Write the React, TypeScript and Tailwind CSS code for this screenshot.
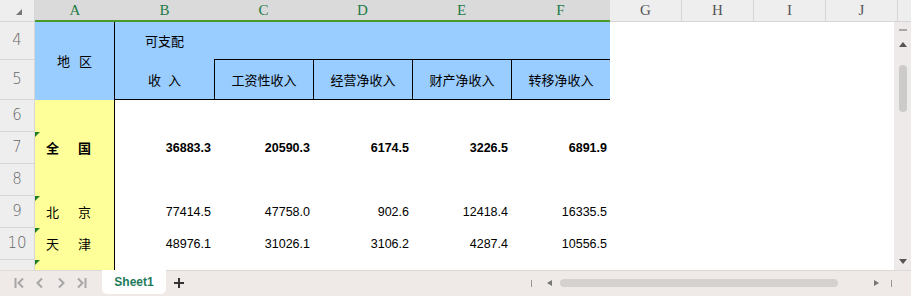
import React from "react";

const cjk = { fontFamily: '"Noto Sans CJK SC", sans-serif' };
const num = { fontFamily: '"Liberation Sans", Arial, sans-serif' };
const hdr = { fontFamily: '"Liberation Serif", "DejaVu Serif", serif' };

function Tri() {
  return (
    <div className="absolute left-0 top-0 w-0 h-0 border-t-[5px] border-t-[#1f7a2a] border-r-[5px] border-r-transparent" />
  );
}

function RowNum({ n, h }: { n: string; h: string }) {
  return (
    <div
      className={`${h} flex items-center justify-center bg-[#eeeeee] border-b border-r border-[#d6d6d6] text-[15px] font-light text-[#666]`}
      style={{ fontFamily: '"DejaVu Sans", sans-serif', fontWeight: 200 }}
    >
      {n}
    </div>
  );
}

const rows = [
  { n: "6", name: null, vals: null, bold: false, tri: false },
  { n: "7", name: ["全", "国"], vals: ["36883.3", "20590.3", "6174.5", "3226.5", "6891.9"], bold: true, tri: true },
  { n: "8", name: null, vals: null, bold: false, tri: false },
  { n: "9", name: ["北", "京"], vals: ["77414.5", "47758.0", "902.6", "12418.4", "16335.5"], bold: false, tri: true },
  { n: "10", name: ["天", "津"], vals: ["48976.1", "31026.1", "3106.2", "4287.4", "10556.5"], bold: false, tri: true },
];

export default function App() {
  const sel = ["A", "B", "C", "D", "E", "F"];
  const selW = ["w-[80px]", "w-[99px]", "w-[99px]", "w-[99px]", "w-[99px]", "w-[99px]"];
  return (
    <div className="w-[911px] h-[296px] overflow-hidden bg-white flex flex-col">
      {/* column header */}
      <div className="flex h-[22px] shrink-0 bg-[#eeeeee]">
        <div className="w-[35px] h-[22px] border-r border-b border-[#d6d6d6] relative flex items-start justify-center">
          <div className="mt-[9px] ml-[4px] w-0 h-0 border-b-[6px] border-b-[#777] border-l-[6px] border-l-transparent" />
        </div>
        {sel.map((c, i) => (
          <div
            key={c}
            className={`${selW[i]} h-[22px] bg-[#dadada] border-b-2 border-[#4a9a2a] flex items-center justify-center text-[15px] text-[#1e7a46]`}
            style={hdr}
          >
            {c}
          </div>
        ))}
        {["G", "H", "I", "J"].map((c) => (
          <div
            key={c}
            className="w-[72px] h-[22px] border-b border-r border-[#d6d6d6] flex items-center justify-center text-[15px] text-[#555]"
            style={hdr}
          >
            {c}
          </div>
        ))}
        <div className="flex-1 h-[22px] border-b border-[#d6d6d6]" />
      </div>

      {/* body */}
      <div className="flex h-[248px] shrink-0">
        <div className="w-[894px] grid grid-cols-[35px_80px_99px_99px_99px_99px_99px_1fr] grid-rows-[38px_40px_32px_32px_32px_32px_32px_10px] overflow-hidden">
          {/* row 4 & 5 */}
          <div className="col-start-1 row-start-1"><RowNum n="4" h="h-[38px]" /></div>
          <div className="col-start-1 row-start-2"><RowNum n="5" h="h-[40px]" /></div>
          <div
            className="col-start-2 row-start-1 row-span-2 bg-[#99ccff] border-r border-black flex items-center justify-center gap-[9px] text-[13px] text-black"
            style={cjk}
          >
            <span>地</span>
            <span>区</span>
          </div>
          <div
            className="col-start-3 row-start-1 row-span-2 bg-[#99ccff] border-b border-black flex flex-col text-[13px] text-black"
            style={cjk}
          >
            <div className="h-[38px] flex items-center justify-center">可支配</div>
            <div className="flex-1 flex items-center justify-center gap-[7px]">
              <span>收</span>
              <span>入</span>
            </div>
          </div>
          <div className="col-start-4 col-span-4 row-start-1 bg-[#99ccff] border-b border-black" />
          {["工资性收入", "经营净收入", "财产净收入", "转移净收入"].map((t, i) => (
            <div
              key={t}
              className={`row-start-2 bg-[#99ccff] border-b border-l border-black flex items-center justify-center text-[13px] text-black ${
                ["col-start-4", "col-start-5", "col-start-6", "col-start-7"][i]
              }`}
              style={cjk}
            >
              {t}
            </div>
          ))}
          <div className="col-start-8 row-start-1 row-span-2 bg-white" />

          {/* data rows */}
          {rows.map((r) => (
            <React.Fragment key={r.n}>
              <RowNum n={r.n} h="h-[32px]" />
              <div className="relative bg-[#ffff99] border-r border-black flex items-center">
                {r.tri && <Tri />}
                {r.name && (
                  <div
                    className={`ml-[11px] flex gap-[19px] text-[13px] text-black ${r.bold ? "font-bold" : ""}`}
                    style={cjk}
                  >
                    <span>{r.name[0]}</span>
                    <span>{r.name[1]}</span>
                  </div>
                )}
              </div>
              {[0, 1, 2, 3, 4].map((k) => (
                <div
                  key={k}
                  className={`flex items-center justify-end pr-[3px] text-[12.5px] text-black ${r.bold ? "font-bold" : ""}`}
                  style={num}
                >
                  {r.vals ? r.vals[k] : ""}
                </div>
              ))}
              <div />
            </React.Fragment>
          ))}
          {/* row 11 partial */}
          <div className="bg-[#eeeeee] border-r border-[#d6d6d6]" />
          <div className="relative bg-[#ffff99] border-r border-black">
            <Tri />
          </div>
          <div className="col-span-6" />
        </div>

        {/* vertical scrollbar */}
        <div className="w-[17px] bg-[#eeeae9] flex flex-col items-center">
          <div className="mt-[7px] w-[8px] h-[2px] bg-[#a8a8a8]" />
          <div className="mt-[11px] w-0 h-0 border-l-[4px] border-r-[4px] border-b-[5px] border-l-transparent border-r-transparent border-b-[#555]" />
          <div className="mt-[18px] w-[8px] h-[47px] rounded-full bg-[#cdcbca]" />
          <div className="flex-1" />
          <div className="mb-[6px] w-0 h-0 border-l-[4px] border-r-[4px] border-t-[5px] border-l-transparent border-r-transparent border-t-[#555]" />
        </div>
      </div>

      {/* bottom bar */}
      <div className="h-[26px] shrink-0 flex items-start bg-[#efeae8] border-t border-[#dedad8]">
        <div className="flex items-center h-[24px] text-[#a6a6a6] ml-[14px] gap-[11px]">
          <svg width="10" height="12" viewBox="0 0 10 12">
            <path d="M1.5 1v10" stroke="#a6a6a6" strokeWidth="2" />
            <path d="M9 1.5L4.5 6L9 10.5" stroke="#a6a6a6" strokeWidth="2" fill="none" />
          </svg>
          <svg width="10" height="12" viewBox="0 0 10 12">
            <path d="M7 1.5L2.5 6L7 10.5" stroke="#a6a6a6" strokeWidth="2" fill="none" />
          </svg>
          <svg width="10" height="12" viewBox="0 0 10 12">
            <path d="M3 1.5L7.5 6L3 10.5" stroke="#a6a6a6" strokeWidth="2" fill="none" />
          </svg>
          <svg width="10" height="12" viewBox="0 0 10 12">
            <path d="M1 1.5L5.5 6L1 10.5" stroke="#a6a6a6" strokeWidth="2" fill="none" />
            <path d="M8.5 1v10" stroke="#a6a6a6" strokeWidth="2" />
          </svg>
        </div>
        <div
          className="ml-[15px] -mt-px w-[64px] h-[24px] bg-white rounded-b-[5px] flex items-center justify-center text-[12px] font-bold text-[#1e7a5a]"
          style={num}
        >
          Sheet1
        </div>
        <div className="ml-[7px] h-[24px] flex items-center">
          <svg width="12" height="12" viewBox="0 0 12 12">
            <path d="M6 1v10M1 6h10" stroke="#333" strokeWidth="2" />
          </svg>
        </div>
        <div className="flex-1" />
        <div className="h-[24px] flex items-center mr-[19px]">
          <div className="w-px h-[7px] bg-[#999]" />
          <div className="ml-[15px] w-0 h-0 border-t-[3px] border-b-[3px] border-r-[5px] border-t-transparent border-b-transparent border-r-[#777]" />
          <div className="ml-[8px] w-[278px] h-[8px] rounded-full bg-[#d5d1cf]" />
          <div className="ml-[36px] w-0 h-0 border-t-[3px] border-b-[3px] border-l-[5px] border-t-transparent border-b-transparent border-l-[#777]" />
          <div className="ml-[12px] w-px h-[7px] bg-[#999]" />
        </div>
      </div>
    </div>
  );
}
